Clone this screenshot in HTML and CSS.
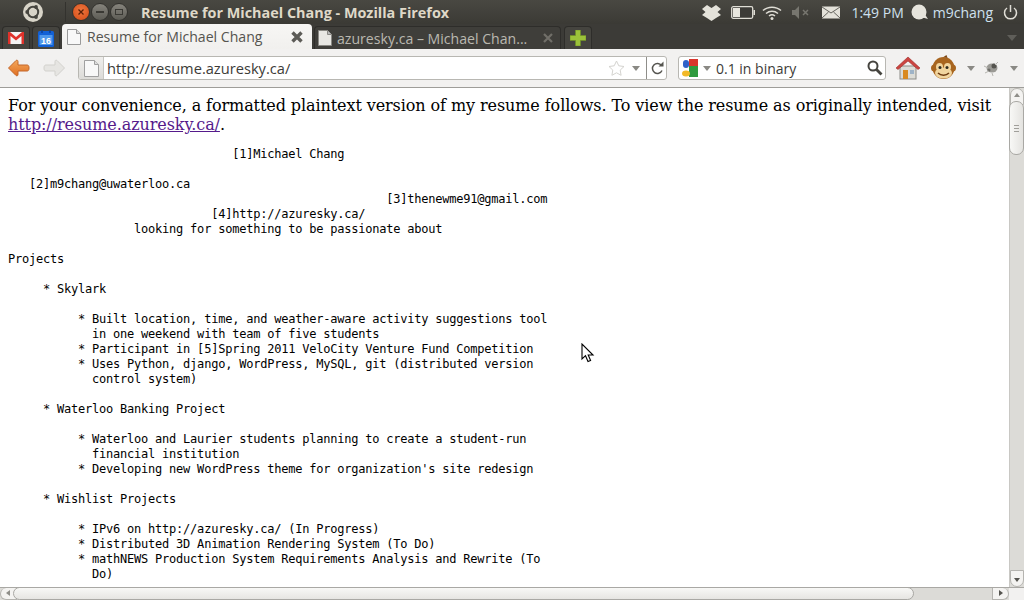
FILE: index.html
```html
<!DOCTYPE html>
<html lang="en">
<head>
<meta charset="utf-8">
<title>Resume for Michael Chang - Mozilla Firefox</title>
<link rel="stylesheet" href="styles.css">
</head>
<body>
<div class="window">
  <header class="panel">
    <svg class="ubuntu" viewBox="0 0 20 20" width="20" height="20"><circle cx="10" cy="10" r="10" fill="#d8d4c8"/><circle cx="10" cy="10" r="5.2" fill="none" stroke="#46453f" stroke-width="2"/><circle cx="4.2" cy="10" r="1.9" fill="#46453f"/><circle cx="13" cy="5" r="1.9" fill="#46453f"/><circle cx="13" cy="15" r="1.9" fill="#46453f"/></svg>
    <span class="panel-sep"></span>
    <div class="winbtns">
      <span class="winbtn close"><svg viewBox="0 0 8 8" width="8" height="8"><path d="M1.5 1.5l5 5M6.500 1.500l-5 5" stroke="#5a2008" stroke-width="1.3"/></svg></span>
      <span class="winbtn"><i class="min"></i></span>
      <span class="winbtn"><i class="max"></i></span>
    </div>
    <div class="wintitle">Resume for Michael Chang - Mozilla Firefox</div>
    <div class="indicators">
      <svg width="19" height="17" viewBox="0 0 19 17"><path d="M0 5l5-4 4.500 3L14 1l5 4-3.500 3 3.500 3-5 3-4.500 3L5 14l-5-3 3.500-3z" fill="#e4e2da"/></svg>
      <svg class="battery" width="24" height="13" viewBox="0 0 24 13"><rect x=".7" y=".7" width="21" height="11.600" rx="1.500" fill="#3c3b37" stroke="#dfddd5" stroke-width="1.300"/><rect x="2" y="2" width="7" height="9" fill="#e8e6de"/><rect x="22.500" y="4" width="1.500" height="5" fill="#dfddd5"/></svg>
      <svg class="wifi" width="20" height="15" viewBox="0 0 20 15"><g fill="none" stroke="#dfddd5" stroke-width="1.500"><path d="M1 5.500c5-4.500 13-4.500 18 0"/><path d="M4 8.500c3.500-3 8.500-3 12 0"/><path d="M7 11c1.800-1.400 4.200-1.400 6 0"/></g><circle cx="10" cy="13.500" r="1.500" fill="#dfddd5"/></svg>
      <svg class="mute" width="18" height="13" viewBox="0 0 18 13"><path d="M0 4h3l4-4v13l-4-4H0z" fill="#77766f"/><path d="M11 4l5 5M16 4l-5 5" stroke="#77766f" stroke-width="1.500"/></svg>
      <svg class="mail" width="18" height="13" viewBox="0 0 18 13"><rect width="18" height="12" y=".5" fill="#e4e2da"/><path d="M0 1l9 6 9-6M0 12l6.500-6M18 12l-6.500-6" fill="none" stroke="#55544e" stroke-width=".9"/></svg>
      <span class="clock">1:49 PM</span>
      <span class="user"><svg width="18" height="16" viewBox="0 0 18 16"><circle cx="8" cy="8" r="7.500" fill="#e6e4dc"/><path d="M10 13l7 2-4-6z" fill="#e6e4dc"/></svg>m9chang</span>
      <svg class="power" width="15" height="15" viewBox="0 0 15 15"><path d="M4 3a6 6 0 1 0 7 0" fill="none" stroke="#dfddd5" stroke-width="1.500"/><path d="M7.500 0v7" stroke="#dfddd5" stroke-width="1.500"/></svg>
    </div>
  </header>

  <nav class="tabbar">
    <div class="tab pin"><svg width="16" height="12" viewBox="0 0 16 12"><rect width="16" height="12" fill="#f4f4f4"/><path d="M0 0h2l6 5 6-5h2v12h-2.500V4L8 8.500 2.500 4v8H0z" fill="#e0322b"/></svg></div>
    <div class="tab pin"><svg width="16" height="17" viewBox="0 0 16 17"><rect y="1" width="16" height="16" rx="1.500" fill="#1260d6"/><rect x="1.500" y="5" width="13" height="10" fill="#4f97ea"/><path d="M4 0v3M12 0v3" stroke="#0d3f94" stroke-width="1.500"/><text class="cal-num" x="8" y="14" text-anchor="middle">16</text></svg></div>
    <div class="tab active">
      <svg class="page" width="14" height="16" viewBox="0 0 14 16"><path d="M.5.500h9l4 4v11H.5z" fill="#f8f8f8" stroke="#9a9a9a"/><path d="M9.500.500v4h4" fill="#ddd" stroke="#9a9a9a"/></svg>
      <span class="tab-label">Resume for Michael Chang</span>
      <svg class="tab-x" width="14" height="14" viewBox="0 0 14 14"><path d="M2.500 2.500l9 9M11.500 2.500l-9 9" stroke="#5c5b57" stroke-width="3.400"/></svg>
    </div>
    <div class="tab inactive">
      <svg class="page" width="14" height="16" viewBox="0 0 14 16"><path d="M.5.500h9l4 4v11H.5z" fill="#e8e7e3" stroke="#8a8984"/><path d="M9.500.500v4h4" fill="#bbb" stroke="#8a8984"/></svg>
      <span class="tab-label">azuresky.ca – Michael Chan...</span>
      <svg class="tab-x" width="12" height="12" viewBox="0 0 12 12"><path d="M2 2l8 8M10 2l-8 8" stroke="#716f69" stroke-width="2.200"/></svg>
    </div>
    <div class="tab pin plus"><svg width="16" height="16" viewBox="0 0 16 16"><path d="M5.500 0h5v5.500H16v5h-5.500V16h-5v-5.500H0v-5h5.500z" fill="#9cc23a" stroke="#6d8f24" stroke-width=".6"/></svg></div>
    <span class="tab-more"></span>
  </nav>

  <div class="toolbar">
    <svg class="back" width="23" height="18" viewBox="0 0 23 18"><defs><linearGradient id="bk" x1="0" y1="0" x2="0" y2="1"><stop offset="0" stop-color="#f4a85c"/><stop offset="1" stop-color="#df6f22"/></linearGradient></defs><path d="M9 1.500L1.500 9 9 16.500c1 .7 2 .2 2-1V12h9c1.500 0 2-1 2-3s-.5-3-2-3h-9V2.500c0-1.200-1-1.700-2-1z" fill="url(#bk)" stroke="#c4672a" stroke-linejoin="round"/></svg>
    <svg class="forward" width="23" height="18" viewBox="0 0 23 18"><path d="M14 1.500L21.500 9 14 16.500c-1 .7-2 .2-2-1V12H3c-1.500 0-2-1-2-3s.5-3 2-3h9V2.500c0-1.200 1-1.700 2-1z" fill="#e6e5e2" stroke="#d2d1cd" stroke-linejoin="round"/></svg>
    <div class="urlbar">
      <span class="site"><svg width="15" height="17" viewBox="0 0 15 17"><path d="M.5.500h10l4 4v12H.5z" fill="#f8f8f8" stroke="#a0a0a0"/><path d="M10.500.500v4h4" fill="#ddd" stroke="#a0a0a0"/></svg></span>
      <span class="url">http://resume.azuresky.ca/</span>
      <svg class="star" width="17" height="16" viewBox="0 0 17 16"><path d="M8.500 1l2.300 4.800 5.200.7-3.800 3.600.9 5.200-4.600-2.500-4.600 2.500.9-5.200L1 6.500l5.200-.7z" fill="#fff" stroke="#d4d3cf"/></svg>
      <span class="arrow"></span>
      <span class="reload"><svg width="14" height="14" viewBox="0 0 14 14"><path d="M11.500 4.500A5 5 0 1 0 12 9.500" fill="none" stroke="#55544f" stroke-width="1.500"/><path d="M8.500 5.500h5v-5z" fill="#55544f"/></svg></span>
    </div>
    <div class="searchbar">
      <svg width="17" height="18" viewBox="0 0 17 18"><rect x="7" y="0" width="9" height="8" fill="#d9352c"/><rect x="7" y="7" width="9" height="11" fill="#2f9a3e"/><rect x="1" y="1" width="6" height="8" rx="3" fill="#2f62c8"/><ellipse cx="4" cy="14.500" rx="4" ry="3" fill="#f2b927"/></svg>
      <span class="arrow"></span>
      <span class="query">0.1 in binary</span>
      <svg class="mag" width="16" height="16" viewBox="0 0 16 16"><circle cx="6" cy="6" r="4.500" fill="none" stroke="#45443f" stroke-width="2"/><path d="M9.500 9.500l5 5" stroke="#45443f" stroke-width="2.800"/></svg>
    </div>
    <svg class="home" width="24" height="24" viewBox="0 0 24 24"><rect x="4" y="10" width="16" height="13" fill="#dcdcd6" stroke="#8c8c86"/><path d="M0 12L12 1l12 11-2 1.500L12 5 2 13.500z" fill="#cc4540" stroke="#9c2e2a" stroke-width=".6"/><rect x="7" y="14" width="5" height="9" fill="#d98a1f"/><rect x="14" y="14" width="4" height="4" fill="#9eb3c7"/></svg>
    <svg class="monkey" width="25" height="26" viewBox="0 0 25 26"><circle cx="3.500" cy="13" r="3.500" fill="#a8651f"/><circle cx="21.500" cy="13" r="3.500" fill="#a8651f"/><circle cx="12.500" cy="13" r="11" fill="#a8651f"/><path d="M12.500 2l3-2 1 3z" fill="#7a4512"/><ellipse cx="8.500" cy="12" rx="3.500" ry="4" fill="#f1d59f"/><ellipse cx="16.500" cy="12" rx="3.500" ry="4" fill="#f1d59f"/><ellipse cx="12.500" cy="18" rx="8.500" ry="5.500" fill="#f1d59f"/><circle cx="9" cy="12.500" r="1.500" fill="#2d2a20"/><circle cx="16" cy="12.500" r="1.500" fill="#2d2a20"/><path d="M7 18c3 3 8 3 11 0" fill="none" stroke="#6c3a10" stroke-width="1.500"/></svg>
    <span class="arrow mk"></span>
    <svg class="bug" width="17" height="15" viewBox="0 0 17 15"><ellipse cx="9" cy="7" rx="5.500" ry="4.500" fill="#9a9994"/><circle cx="11" cy="5" r="2.500" fill="#55544f"/><circle cx="6" cy="9" r="1.500" fill="#6e6d68"/><path d="M1 5l4 2M2 12l4-2M9 12l1 3M15 1l-3 3" stroke="#b5b4af" stroke-width="1"/></svg>
    <span class="arrow bg"></span>
  </div>

  <div class="viewport">
    <main class="page-content">
      <p class="intro">For your convenience, a formatted plaintext version of my resume follows. To view the resume as originally intended, visit <a href="#">http://resume.azuresky.ca/</a>.</p>
<pre class="resume">                                [1]Michael Chang

   [2]m9chang@uwaterloo.ca
                                                      [3]thenewme91@gmail.com
                             [4]http://azuresky.ca/
                  looking for something to be passionate about

Projects

     * Skylark

          * Built location, time, and weather-aware activity suggestions tool
            in one weekend with team of five students
          * Participant in [5]Spring 2011 VeloCity Venture Fund Competition
          * Uses Python, django, WordPress, MySQL, git (distributed version
            control system)

     * Waterloo Banking Project

          * Waterloo and Laurier students planning to create a student-run
            financial institution
          * Developing new WordPress theme for organization's site redesign

     * Wishlist Projects

          * IPv6 on http://azuresky.ca/ (In Progress)
          * Distributed 3D Animation Rendering System (To Do)
          * mathNEWS Production System Requirements Analysis and Rewrite (To
            Do)</pre>
    </main>
    <aside class="vscroll">
      <span class="sb-btn up"></span>
      <span class="vthumb"><i></i><i></i><i></i></span>
      <span class="sb-btn down"></span>
    </aside>
    <svg class="cursor" width="14" height="20" viewBox="0 0 14 20"><path d="M1 1v15l3.500-3.300L7 18.500l2.600-1-2.400-5.500H12z" fill="#fff" stroke="#000" stroke-width="1.100"/></svg>
  </div>

  <div class="hscroll">
    <span class="hb-btn left"></span>
    <span class="hthumb"></span>
    <span class="hb-btn right"></span>
    <span class="corner"></span>
  </div>
</div>
</body>
</html>
```
FILE: styles.css
```css
* { box-sizing: border-box; }
html, body { margin: 0; height: 100%; overflow: hidden; background: #fff; }
.window { width: 1024px; height: 600px; display: flex; flex-direction: column; font-family: "Open Sans", "Noto Sans", sans-serif; }

.panel { height: 24px; flex: none; display: flex; align-items: center; background: linear-gradient(#494842, #3b3a35); padding-left: 23px; }
.ubuntu { flex: none; }
.panel-sep { width: 1px; height: 20px; background: #33322e; margin-left: 22px; }
.winbtns { display: flex; gap: 1px; margin-left: 6px; }
.winbtn { width: 18px; height: 18px; border-radius: 50%; background: linear-gradient(#86847c, #5d5c55); border: 1px solid #33322e; display: flex; align-items: center; justify-content: center; }
.winbtn.close { background: radial-gradient(circle at 50% 40%, #f0763e, #d24b16); }
.min { width: 8px; height: 2px; background: #3a3934; }
.max { width: 8px; height: 6px; border: 1px solid #3a3934; }
.wintitle { margin-left: 13px; font-size: 14.400px; font-weight: 700; color: #dfd8c8; white-space: nowrap; }
.indicators { margin-left: auto; display: flex; align-items: center; padding-right: 6px; color: #dfddd5; font-size: 14px; }
.battery { margin-left: 10px; }
.wifi { margin-left: 7px; }
.mute { margin-left: 10px; }
.mail { margin-left: 12px; }
.clock { margin-left: 11px; color: #cfe0ee; white-space: nowrap; }
.user { margin-left: 7px; display: flex; align-items: center; gap: 4px; color: #cfe0ee; }
.power { margin-left: 10px; }

.tabbar { height: 25px; flex: none; display: flex; align-items: flex-end; background: #3c3b37; padding-left: 2px; gap: 2px; position: relative; }
.tab { height: 23px; display: flex; align-items: center; border-radius: 4px 4px 0 0; flex: none; background: #45443f; border: 1px solid #2e2d2a; border-bottom: 0; }
.pin { width: 28px; justify-content: center; }
.plus { margin-left: 1px; }
.cal-num { font: 700 9px "Liberation Sans", sans-serif; fill: #fff; }
.active { width: 250px; height: 25px; background: linear-gradient(#f7f6f4, #f1f0ee); color: #55544f; padding: 0 8px 0 5px; border: 0; }
.inactive { width: 247px; background: #3f3e3a; color: #bab8b0; padding: 0 6px 0 3px; }
.tab-label { font-size: 14.100px; white-space: nowrap; margin-left: 6px; overflow: hidden; flex: 1; }
.inactive .tab-label { margin-left: 5px; }
.tab-more { margin-left: auto; margin-right: 7px; margin-bottom: 8px; width: 0; height: 0; border: 5px solid transparent; border-top: 6px solid #5f5e59; border-bottom: 0; }

.toolbar { height: 39px; flex: none; display: flex; align-items: center; background: #f2f1f0; border-bottom: 1px solid #9e9d99; padding-left: 7px; }
.forward { margin-left: 13px; }
.urlbar { width: 589px; height: 24px; margin-left: 12px; background: #fff; border: 1px solid #b8b7b2; border-radius: 3px; display: flex; align-items: center; }
.site { width: 25px; height: 22px; background: linear-gradient(#f0efed, #dcdbd8); border-right: 1px solid #c8c7c3; display: flex; align-items: center; justify-content: center; flex: none; border-radius: 2px 0 0 2px; }
.url { margin-left: 3px; flex: 1; font-size: 14.650px; color: #3c3b37; white-space: nowrap; }
.star { margin-right: 7px; }
.arrow { width: 0; height: 0; border: 4px solid transparent; border-top: 5px solid #8a8984; border-bottom: 0; flex: none; }
.reload { width: 20px; height: 22px; margin-left: 6px; border-left: 1px solid #8f8e8a; display: flex; align-items: center; justify-content: center; }
.searchbar { width: 208px; height: 24px; margin-left: 11px; background: #fff; border: 1px solid #b8b7b2; border-radius: 3px; display: flex; align-items: center; padding: 0 2px 0 3px; }
.searchbar .arrow { margin-left: 4px; }
.query { margin-left: 5px; flex: 1; font-size: 14px; color: #3c3b37; white-space: nowrap; }
.home { margin-left: 10px; }
.monkey { margin-left: 11px; }
.mk { margin-left: 11px; }
.bug { margin-left: 8px; }
.bg { margin-left: 10px; }

.viewport { flex: 1; min-height: 0; display: flex; position: relative; overflow: hidden; }
.page-content { flex: 1; min-width: 0; overflow: hidden; padding: 8px; background: #fff; color: #000; }
.intro { margin: 0; font: 16px/19px "DejaVu Serif", serif; letter-spacing: -0.085px; }
.intro a { color: #551a8b; }
.resume { margin: 13px 0 0; font: 12px/15px "DejaVu Sans Mono", monospace; letter-spacing: -0.22px; }
.vscroll { width: 15px; flex: none; background: #dcdbd7; border-left: 1px solid #c9c8c4; display: flex; flex-direction: column; justify-content: space-between; position: relative; }
.sb-btn { display: block; height: 17px; background: #f4f3f1; border: 1px solid #b5b4b0; position: relative; }
.sb-btn.up { border-radius: 7px 7px 0 0; }
.sb-btn.down { border-radius: 0 0 7px 7px; }
.sb-btn::after { content: ""; position: absolute; left: 3px; width: 0; height: 0; border: 3.500px solid transparent; }
.up::after { top: 4px; border-bottom: 4px solid #8f8e89; border-top: 0; }
.down::after { top: 7px; border-top: 4px solid #55544f; border-bottom: 0; }
.vthumb { position: absolute; left: -1px; top: 13px; width: 15px; height: 54px; background: linear-gradient(90deg, #f8f8f6, #e4e3e0); border: 1px solid #a9a8a4; border-radius: 7px; display: flex; flex-direction: column; justify-content: center; align-items: center; gap: 2px; }
.vthumb i { width: 5px; height: 1px; background: #a09f9a; }
.cursor { position: absolute; left: 581px; top: 255px; }

.hscroll { height: 13px; flex: none; display: flex; background: #dcdbd7; border-top: 1px solid #a9a8a4; position: relative; }
.hb-btn { width: 17px; height: 100%; background: #f4f3f1; position: relative; flex: none; }
.hb-btn.left { border-radius: 6px 0 0 6px; border: 1px solid #b5b4b0; border-top: 0; }
.hb-btn.right { margin-left: auto; border-radius: 0 6px 6px 0; border: 1px solid #b5b4b0; border-top: 0; }
.hb-btn::after { content: ""; position: absolute; top: 2px; width: 0; height: 0; border: 3.500px solid transparent; }
.left::after { left: 5px; border-right: 4px solid #8f8e89; border-left: 0; }
.right::after { left: 6px; border-left: 4px solid #55544f; border-right: 0; }
.hthumb { position: absolute; left: 13px; top: -1px; width: 901px; height: 13px; background: linear-gradient(#f8f8f6, #e6e5e2); border: 1px solid #a9a8a4; border-radius: 7px; }
.corner { width: 15px; flex: none; background: #f2f1f0; }
```
